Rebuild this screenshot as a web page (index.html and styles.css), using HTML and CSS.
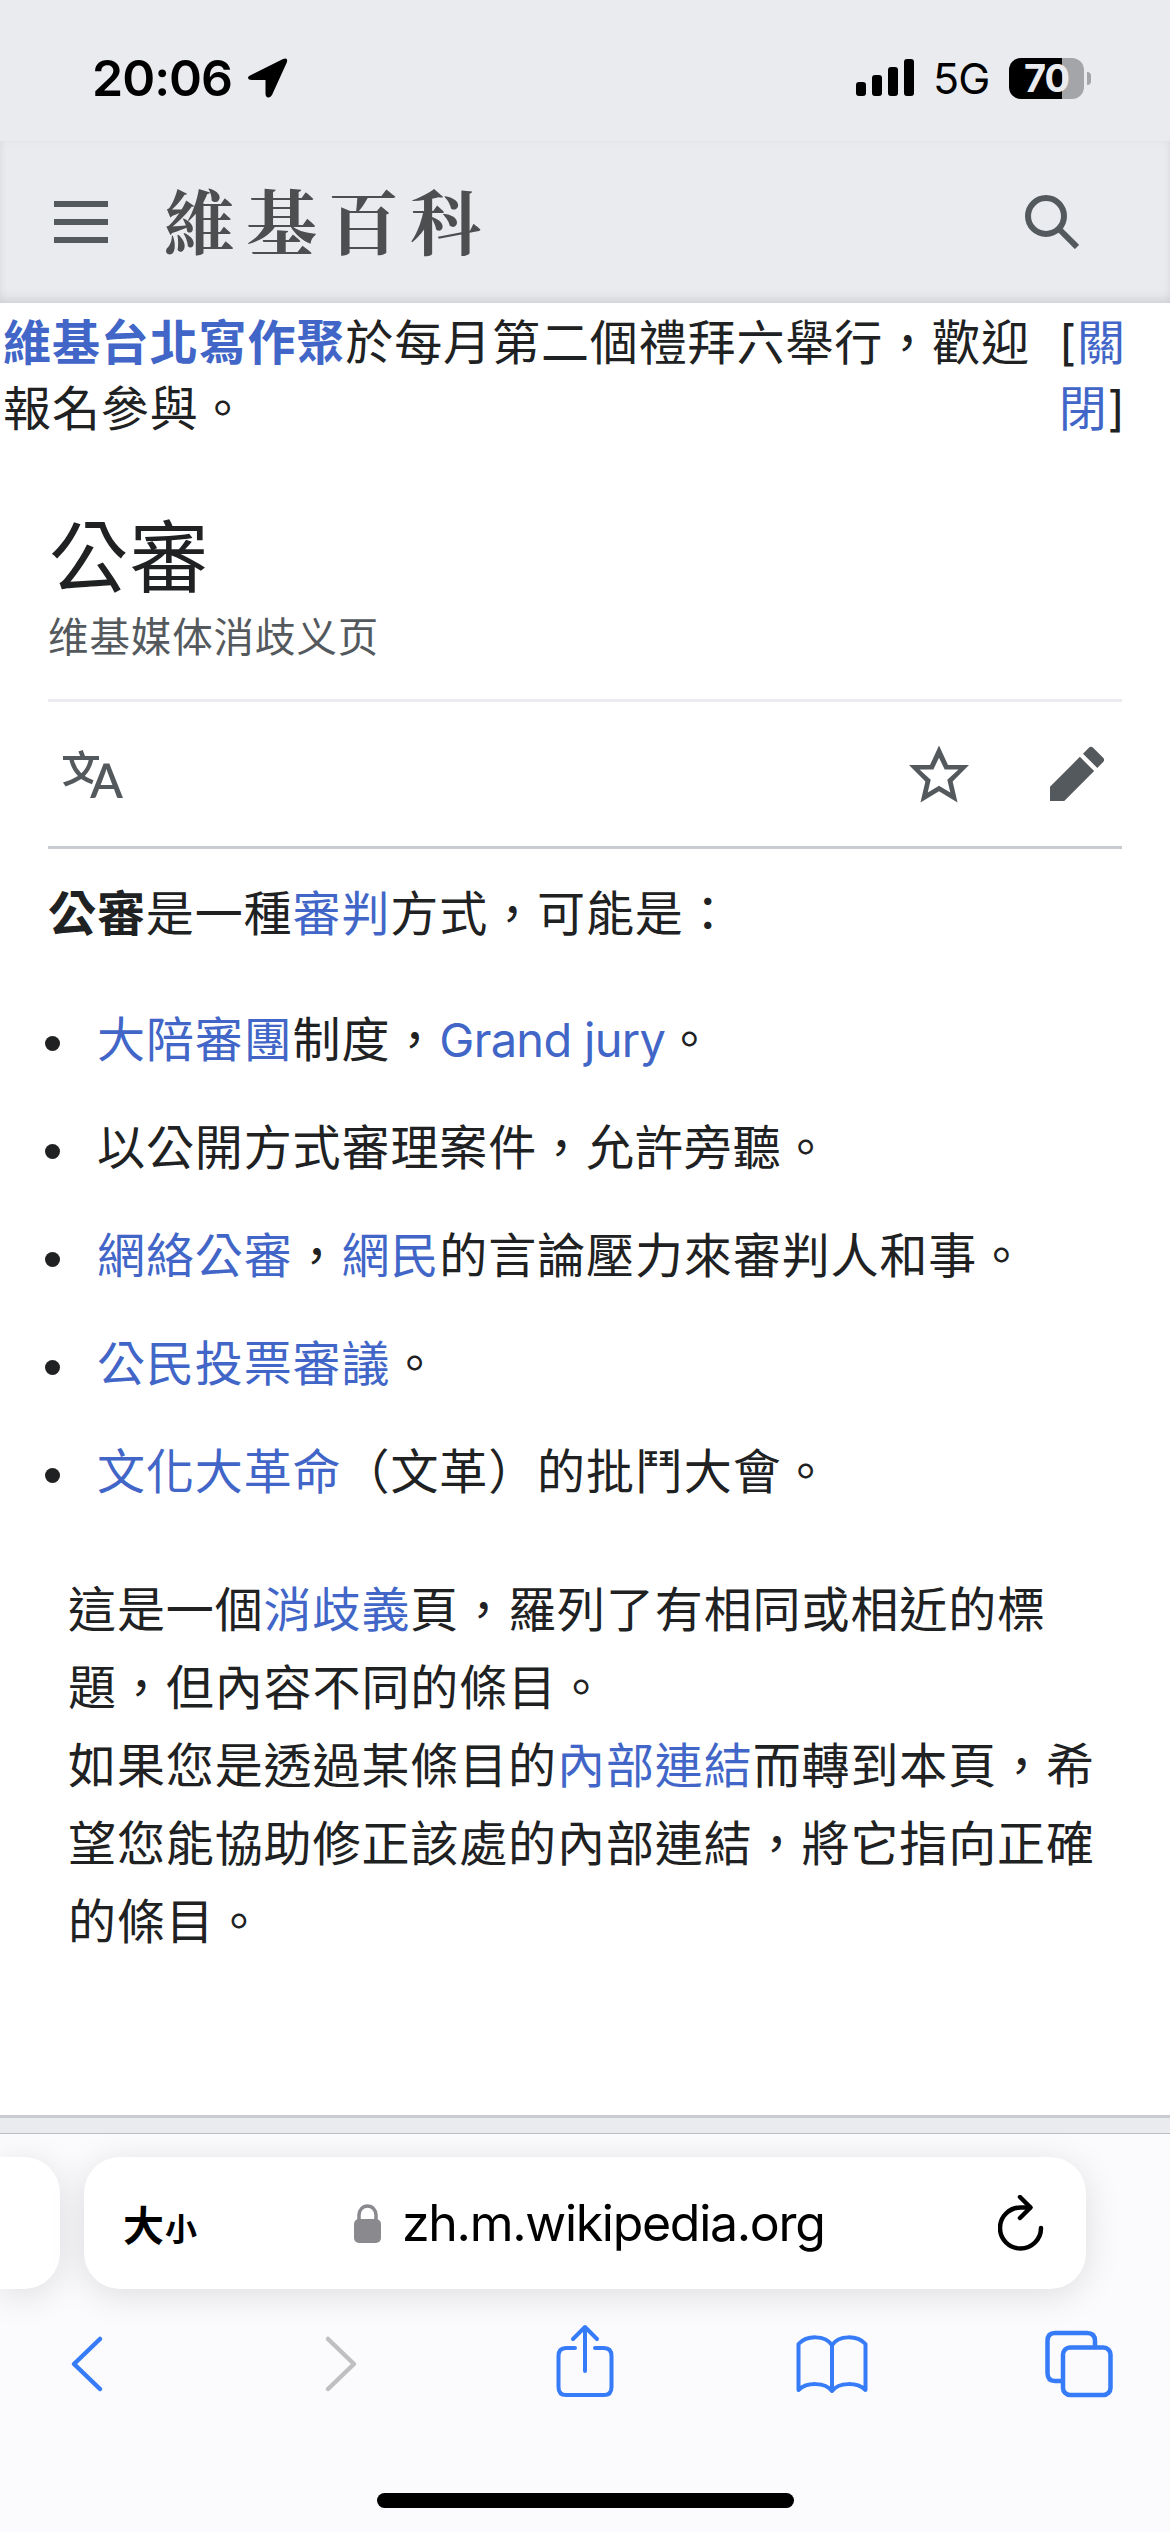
FILE: index.html
```html
<!DOCTYPE html>
<html lang="zh-Hant">
<head>
  <meta charset="UTF-8">
  <title>公審</title>
  <link rel="stylesheet" href="styles.css">
</head>
<body>

  <div class="status-bar">
    <div class="status-left">
      <span class="time">20:06</span>
      <svg class="location" width="40" height="40" viewBox="0 0 40 40"><path d="M3 17 L35 1 Q40 -1 39 4 L24 37 Q22 40 19.5 39.5 Q17.500 39 17.500 36 V22 H4 Q0 22 0 19.500 Q0 18 3 17Z"/></svg>
    </div>
    <div class="status-right">
      <svg width="58" height="38" viewBox="0 0 58 38">
        <rect x="0" y="23" width="10" height="14" rx="3"/>
        <rect x="16" y="16" width="10" height="21" rx="3"/>
        <rect x="32" y="8" width="10" height="29" rx="3"/>
        <rect x="48" y="0" width="10" height="37" rx="3"/>
      </svg>
      <span class="network">5G</span>
      <div class="battery"><span>70</span></div>
      <div class="battery-tip"></div>
    </div>
  </div>

  <header class="site-header">
    <svg class="icon-menu" width="54" height="42" viewBox="0 0 54 42"><path d="M0 0h54v6H0zM0 18h54v6H0zM0 36h54v6H0z"/></svg>
    <div class="logo">維基百科</div>
    <svg class="icon-search" width="54" height="54" viewBox="0 0 54 54"><circle cx="21" cy="21" r="18"/><path d="M34 34 L52 52"/></svg>
  </header>

  <div class="sitenotice">
    <div class="sitenotice-text"><a href="#"><b>維基台北寫作聚</b></a>於每月第二個禮拜六舉行，歡迎報名參與。</div>
    <div class="sitenotice-close">[<a href="#">關<br>閉</a>]</div>
  </div>

  <main class="content">
    <h1>公審</h1>
    <div class="tagline" lang="zh-Hans">维基媒体消歧义页</div>

    <nav class="page-actions">
      <svg width="60" height="60" viewBox="0 0 20 20"><path d="M20 18h-1.440a.610.610 0 0 1-.4-.120.810.810 0 0 1-.230-.310L17 15h-5l-1 2.540a.770.770 0 0 1-.220.300.590.590 0 0 1-.4.140H9l4.550-11.470h1.890zm-3.530-4.310L14.890 9.500a11.620 11.620 0 0 1-.390-1.240q-.090.370-.190.690l-.190.560-1.580 4.190zm-6.300-1.580a13.430 13.430 0 0 1-2.910-1.410 11.460 11.460 0 0 0 2.810-5.370H12V4H7.310a4 4 0 0 0-.2-.560C6.870 2.790 6.600 2 6.600 2l-1.470.500s.4.890.6 1.500H0v1.330h2.150A11.230 11.230 0 0 0 5 10.700a17.190 17.190 0 0 1-5 2.100q.560.820.870 1.380a23.280 23.280 0 0 0 5.220-2.510 15.640 15.640 0 0 0 3.560 1.770zM3.630 5.330h4.910a8.110 8.110 0 0 1-2.450 4.450 9.110 9.110 0 0 1-2.460-4.450"/></svg>
      <div class="actions-right">
        <svg width="60" height="60" viewBox="0 0 20 20"><path d="M20 7h-7L10 .500 7 7H0l5.460 5.470-1.640 7 6.180-3.700 6.180 3.730-1.630-7zm-10 6.900-3.760 2.270 1-4.280L3.500 8.500h4.610L10 4.600l1.900 3.900h4.600l-3.730 3.400 1 4.280z"/></svg>
        <svg width="60" height="60" viewBox="0 0 20 20"><path d="m16.770 8 1.940-2a1 1 0 0 0 0-1.410l-3.340-3.300a1 1 0 0 0-1.410 0L12 3.230zM1 14.250V19h4.750l9.960-9.960-4.750-4.750z"/></svg>
      </div>
    </nav>

    <p><b>公審</b>是一種<a href="#">審判</a>方式，可能是：</p>

    <ul>
      <li><a href="#">大陪審團</a>制度，<a href="#" class="latin">Grand jury</a>。</li>
      <li>以公開方式審理案件，允許旁聽。</li>
      <li><a href="#">網絡公審</a>，<a href="#">網民</a>的言論壓力來審判人和事。</li>
      <li><a href="#">公民投票審議</a>。</li>
      <li><a href="#">文化大革命</a>（文革）的批鬥大會。</li>
    </ul>

    <div class="disambig">
      這是一個<a href="#">消歧義</a>頁，羅列了有相同或相近的標題，但內容不同的條目。<br>
      如果您是透過某條目的<a href="#">內部連結</a>而轉到本頁，希望您能協助修正該處的內部連結，將它指向正確的條目。
    </div>
  </main>

  <div class="page-footer"></div>

  <div class="browser-bar">
    <div class="tabs">
      <div class="tab-prev"></div>
      <div class="address">
        <div class="text-size">大<small>小</small></div>
        <div class="url">
          <svg width="27" height="39" viewBox="0 0 27 39"><rect x="0" y="15" width="27" height="24" rx="5" fill="#8a8a8e"/><path d="M5 18V11a8.500 9 0 0 1 17 0v7" fill="none" stroke="#8a8a8e" stroke-width="3.500"/></svg>
          <span>zh.m.wikipedia.org</span>
        </div>
        <svg class="reload" width="46" height="56" viewBox="0 0 46 56"><path d="M43 33 A20.500 20.500 0 1 1 22.500 12.500 H32"/><path d="M22 2 L32.500 12.500 L22 23"/></svg>
      </div>
    </div>

    <div class="toolbar">
      <svg height="56" viewBox="0 0 32 56"><path d="M29 3 L3 28 L29 53"/></svg>
      <svg height="56" class="disabled" viewBox="-6 0 32 56"><path d="M3 3 L29 28 L3 53"/></svg>
      <svg height="74" viewBox="-2 3 58 74"><path d="M19 24 H10 Q2.500 24 2.500 32 V63 Q2.500 71 10 71 H48 Q55.500 71 55.500 63 V32 Q55.500 24 48 24 H39M29 47V3M17 15 L29 3 L41 15" stroke-width="4"/></svg>
      <svg height="60" viewBox="-1 0 72 60"><path d="M36 11 C29 1 11 1 2.500 10 V56 C11 48 29 48 36 57 C43 48 61 48 69.500 56 V10 C61 1 43 1 36 11Z M36 11V56" stroke-width="4"/></svg>
      <svg height="68" viewBox="0 0 68 68"><rect x="18" y="17.500" width="47.500" height="47.500" rx="7"/><path d="M17 51 H10 Q2.500 51 2.500 43 V11 Q2.500 3 10 3 H42 Q50 3 50 11 V17"/></svg>
    </div>

    <div class="home-indicator"></div>
  </div>

</body>
</html>
```

FILE: styles.css
```css
* {
  box-sizing: border-box;
}

body {
  margin: 0;
  width: 1170px;
  height: 2532px;
  overflow: hidden;
  display: flex;
  flex-direction: column;
  background-color: #fff;
  color: #202122;
  font-family: Inter, "Noto Sans CJK TC", sans-serif;
  font-size: 48px;
  letter-spacing: 0.9px;
}

svg {
  display: block;
  flex: none;
}

a {
  color: #4166c8;
  text-decoration: none;
}

/* status bar */
.status-bar {
  height: 141px;
  padding: 57px 79px 0 92px;
  display: flex;
  justify-content: space-between;
  background-color: #eaebef;
  color: #000;
  letter-spacing: 0;
}

.status-left,
.status-right {
  display: flex;
  align-items: center;
  height: 42px;
}

.time {
  font-size: 50px;
  font-weight: 600;
  letter-spacing: -1px;
  width: 156px;
}

.network {
  font-size: 43px;
  margin-left: 19px;
  width: 76px;
  letter-spacing: -1px;
}

.battery {
  width: 75px;
  height: 41px;
  border-radius: 12px;
  background: linear-gradient(to right, #000 53px, #a4a5a9 53px);
  color: #eaebef;
  font-size: 38px;
  font-weight: 700;
  line-height: 41px;
  text-align: center;
  letter-spacing: -1px;
}

.battery-tip {
  width: 4px;
  height: 13px;
  margin-left: 3px;
  border-radius: 0 4px 4px 0;
  background-color: #a4a5a9;
}

/* header */
.site-header {
  height: 162px;
  padding: 0 91px 0 54px;
  display: flex;
  align-items: center;
  background-color: #eaebef;
  box-shadow: inset 0 -8px 14px -6px rgba(0, 0, 0, 0.12), inset 0 0 8px rgba(0, 0, 0, 0.04);
}

.icon-menu {
  fill: #54595d;
}

.logo {
  margin-left: 56px;
  padding-bottom: 9px;
  font-family: "Noto Serif CJK TC", "Noto Sans CJK TC", serif;
  font-size: 71px;
  font-weight: 700;
  line-height: 100px;
  letter-spacing: 11px;
  color: #4d4e50;
}

.icon-search {
  margin-left: auto;
  fill: none;
  stroke: #54595d;
  stroke-width: 6;
}

/* site notice */
.sitenotice {
  display: flex;
  justify-content: space-between;
  padding: 7px 44px 0 3px;
  line-height: 66px;
}

.sitenotice-text {
  width: 1032px;
}

.sitenotice-close {
  width: 80px;
  text-align: right;
}

/* article */
.content {
  height: 1673px;
  padding: 61px 48px 0;
}

h1 {
  margin: 0 0 0 1px;
  font-size: 79px;
  font-weight: 400;
  line-height: 110px;
  letter-spacing: 1.500px;
}

.tagline {
  height: 86px;
  color: #54595d;
  font-family: Inter, "Noto Sans CJK SC", sans-serif;
  font-size: 40.500px;
  line-height: 50px;
}

.page-actions {
  height: 150px;
  padding: 0 15px;
  display: flex;
  justify-content: space-between;
  align-items: center;
  border-top: 3px solid #eaecf0;
  border-bottom: 3px solid #c8ccd1;
  fill: #54595d;
}

.actions-right {
  display: flex;
  gap: 78px;
}

p {
  margin: 26px 0 48px;
  line-height: 78px;
}

ul {
  margin: 0;
  padding: 0 0 0 49px;
  list-style: none;
}

li {
  line-height: 78px;
  margin-bottom: 30px;
}

li::before {
  content: "";
  display: inline-block;
  width: 15px;
  height: 15px;
  margin: 0 37px 6px -52px;
  border-radius: 50%;
  background-color: #202122;
}

.latin {
  font-size: 47px;
  letter-spacing: -0.700px;
}

.disambig {
  margin-top: 60px;
  padding: 0 20px;
  line-height: 78px;
}

.page-footer {
  height: 19px;
  border-top: 3px solid #c8ccd1;
  border-bottom: 1px solid #bcbec0;
  background-color: #e9ebee;
}

/* browser */
.browser-bar {
  flex: 1;
  overflow: hidden;
  background-color: #fbfbfd;
  color: #000;
}

.tabs {
  display: flex;
  gap: 24px;
  padding-top: 23px;
}

.tab-prev,
.address {
  height: 132px;
  background-color: #fff;
  box-shadow: 0 6px 36px rgba(0, 0, 0, 0.12);
}

.tab-prev {
  width: 60px;
  border-radius: 0 36px 36px 0;
}

.address {
  width: 1002px;
  padding: 0 42px 0 39px;
  display: flex;
  align-items: center;
  border-radius: 36px;
}

.text-size {
  display: flex;
  align-items: baseline;
  width: 231px;
  font-size: 41px;
  font-weight: 700;
  letter-spacing: 0;
}

.text-size small {
  margin-left: 1px;
  font-size: 32px;
}

.url {
  display: flex;
  align-items: center;
  gap: 21px;
  font-size: 50px;
  letter-spacing: -1.300px;
}

.reload {
  margin-left: auto;
  fill: none;
  stroke: #000;
  stroke-width: 4.500;
  stroke-linecap: round;
  stroke-linejoin: round;
}

.toolbar {
  height: 150px;
  padding: 0 55px 0 51px;
  display: flex;
  align-items: center;
  justify-content: space-between;
  fill: none;
  stroke: #367bf7;
  stroke-width: 4.500;
  stroke-linecap: round;
  stroke-linejoin: round;
}

.toolbar svg {
  width: 72px;
  overflow: visible;
}

.toolbar .disabled {
  stroke: #c0c0c2;
}

.home-indicator {
  width: 417px;
  height: 15px;
  margin: 54px auto 0;
  border-radius: 8px;
  background-color: #000;
}
```
